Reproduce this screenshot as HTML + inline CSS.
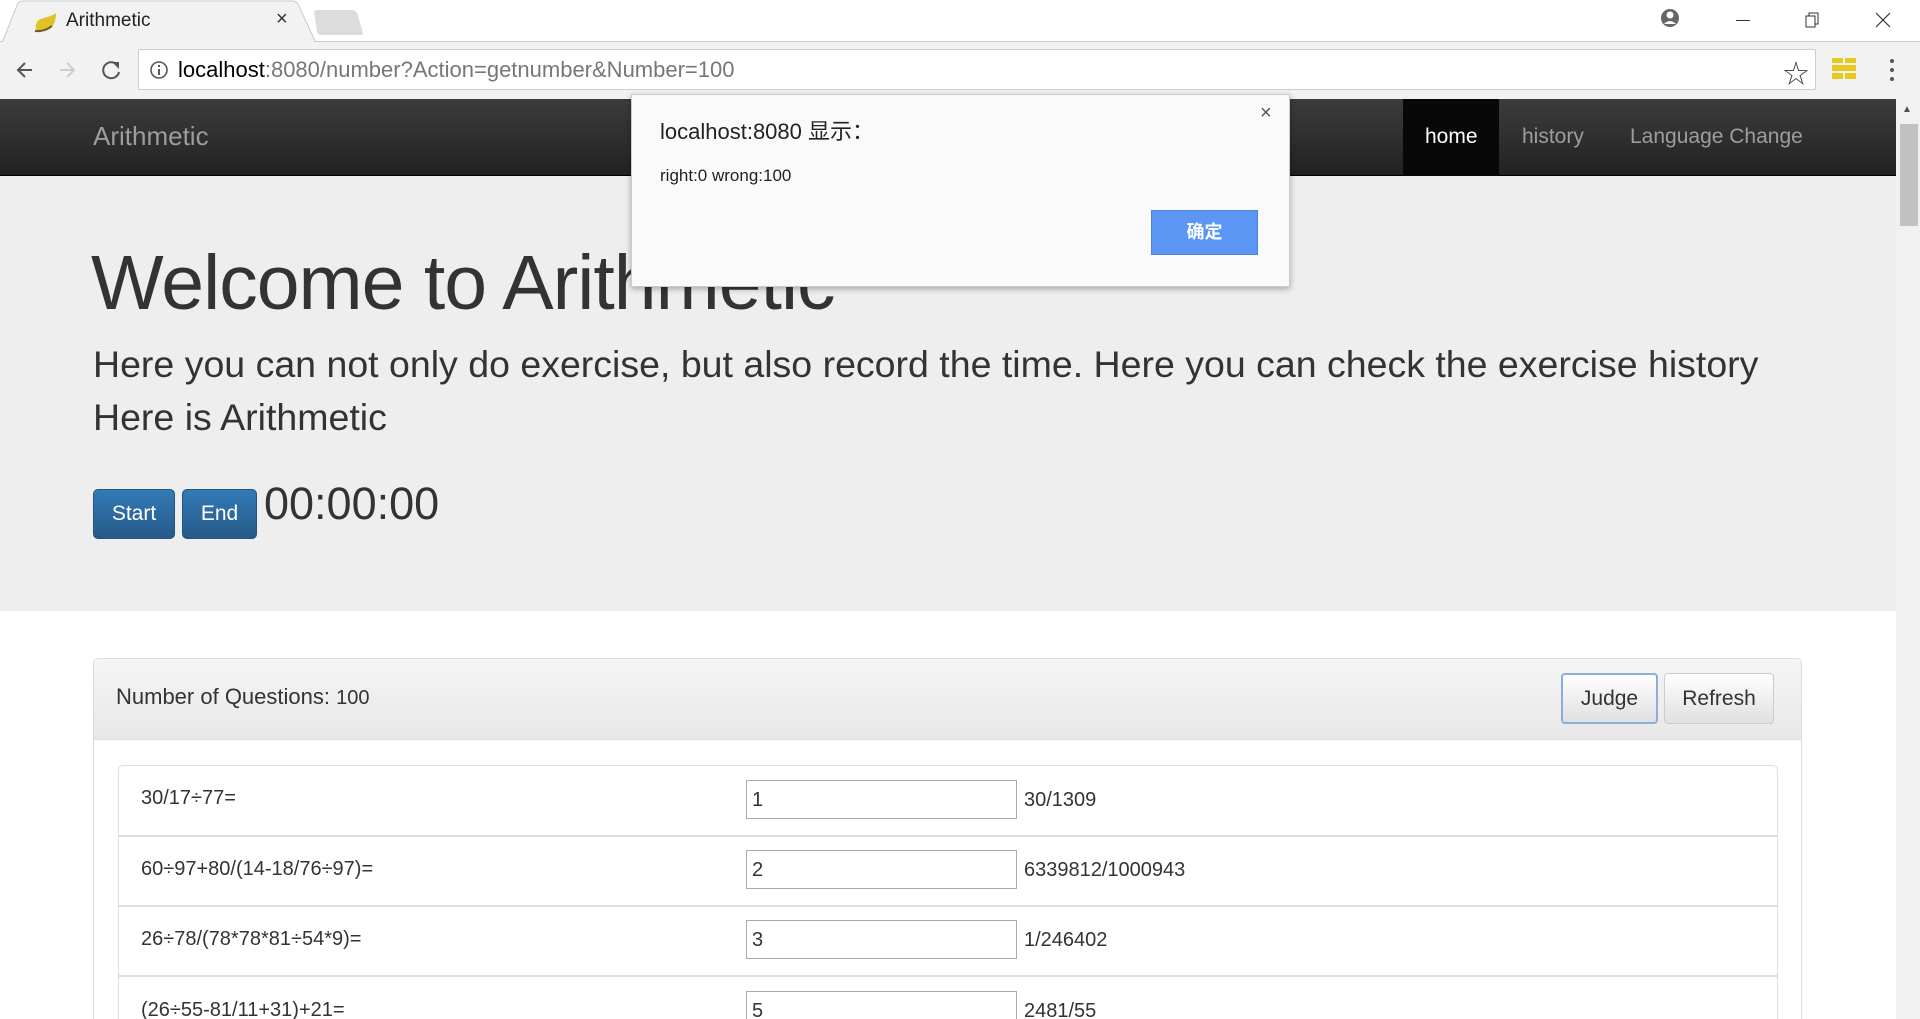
<!DOCTYPE html>
<html style="width:1920px;height:1019px;overflow:hidden"><head><meta charset="utf-8"><style>
*{box-sizing:border-box;margin:0;padding:0}
body{width:1920px;height:1019px;overflow:hidden;background:#fff;font-family:"Liberation Sans","Noto Sans CJK SC",sans-serif;position:relative;color:#333}
.abs{position:absolute}
</style></head><body>
<!-- title bar -->
<div class="abs" style="left:0;top:0;width:1920px;height:42px;background:#fff"></div>
<div class="abs" style="left:0;top:41px;width:1920px;height:1px;background:#ccc"></div>
<svg class="abs" style="left:0;top:0" width="370" height="43"><path d="M2,43 L18,3 Q20,1 24,1 L292,1 Q296,1 298,4 L316,43 Z" fill="#f2f2f2" stroke="#c8c8c8"/><path d="M314,12 Q315,10 318,10 L352,10 Q355,10 357,13 L363,33 Q363,35 360,35 L322,35 Q318,35 317,32 Z" fill="#dcdcdc"/></svg>
<div class="abs" style="left:0;top:42px;width:1920px;height:57px;background:#f2f2f2"></div>
<svg class="abs" style="top:12px;left:32px" width="26" height="22"><path d="M4,18 Q2,8 12,6 Q20,4 24,1 Q24,14 16,18 Q10,21 4,18Z" fill="#e2c228"/><path d="M3,19 Q12,20 20,14" stroke="#6b5a30" stroke-width="2" fill="none"/></svg>
<div class="abs" style="left:66px;top:10px;font-size:19px;color:#222">Arithmetic</div>
<div class="abs" style="left:276px;top:8px;font-size:20px;color:#333">×</div>
<!-- window controls -->
<svg class="abs" style="left:1660px;top:8px" width="24" height="24"><circle cx="10" cy="10" r="9" fill="#666"/><circle cx="10" cy="7" r="3.5" fill="#fff"/><path d="M4,16 Q10,10 16,16" fill="#fff"/></svg>
<div class="abs" style="left:1736px;top:20px;width:14px;height:1px;background:#333"></div>
<svg class="abs" style="left:1805px;top:12px" width="16" height="16"><rect x="1" y="4" width="9" height="11" fill="none" stroke="#333"/><path d="M4,4 V1 H13 V12 H10" fill="none" stroke="#333"/></svg>
<svg class="abs" style="left:1875px;top:12px" width="16" height="16"><path d="M1,1 L15,15 M15,1 L1,15" stroke="#333" stroke-width="1.2"/></svg>
<!-- toolbar -->
<svg class="abs" style="left:14px;top:58px" width="110" height="24"><path d="M18,12 H4 M11,5 L4,12 L11,19" stroke="#555" stroke-width="2" fill="none"/><path d="M46,12 H60 M53,5 L60,12 L53,19" stroke="#ccc" stroke-width="2" fill="none"/><path d="M104,8 A8,8 0 1 0 105,14" stroke="#555" stroke-width="2" fill="none"/><path d="M98,4 L105,4 L105,11Z" fill="#555"/></svg>
<div class="abs" style="left:138px;top:49px;width:1678px;height:41px;background:#fff;border:1px solid #ccc;border-radius:2px"></div>
<svg class="abs" style="left:149px;top:60px" width="20" height="20"><circle cx="10" cy="10" r="8" stroke="#555" stroke-width="1.6" fill="none"/><rect x="9" y="9" width="2" height="6" fill="#555"/><rect x="9" y="5" width="2" height="2" fill="#555"/></svg>
<div class="abs" style="left:178px;top:57px;font-size:22px;color:#000">localhost<span style="color:#777">:8080/number?Action=getnumber&amp;Number=100</span></div>
<div class="abs" style="left:1783px;top:54px;font-size:26px;color:#444">☆</div>
<svg class="abs" style="left:1832px;top:58px" width="26" height="24"><rect x="0" y="0" width="11" height="5" fill="#e6c81e"/><rect x="13" y="0" width="11" height="5" fill="#e6c81e"/><rect x="0" y="7" width="24" height="6" fill="#e6c81e"/><rect x="0" y="15" width="11" height="6" fill="#e6c81e"/><rect x="13" y="15" width="11" height="6" fill="#e6c81e"/></svg>
<svg class="abs" style="left:1889px;top:58px" width="6" height="24"><circle cx="3" cy="3" r="2" fill="#555"/><circle cx="3" cy="12" r="2" fill="#555"/><circle cx="3" cy="21" r="2" fill="#555"/></svg>
<!-- navbar -->
<div class="abs" style="left:0;top:99px;width:1896px;height:77px;background:linear-gradient(#3c3c3c,#222);border-bottom:1px solid #000"></div>
<div class="abs" style="left:93px;top:121px;font-size:26px;color:#9d9d9d">Arithmetic</div>
<div class="abs" style="left:1403px;top:99px;width:96px;height:77px;background:#080808"></div>
<div class="abs" style="left:1425px;top:125px;font-size:21px;color:#fff">home</div>
<div class="abs" style="left:1522px;top:125px;font-size:21px;color:#9d9d9d">history</div>
<div class="abs" style="left:1630px;top:125px;font-size:21px;color:#9d9d9d">Language Change</div>
<!-- scrollbar -->
<div class="abs" style="left:1896px;top:99px;width:24px;height:920px;background:#f1f1f1"></div>
<div class="abs" style="left:1900px;top:124px;width:18px;height:102px;background:#c1c1c1"></div>
<div class="abs" style="left:1902px;top:104px;font-size:10px;color:#505050">▲</div>
<!-- jumbotron -->
<div class="abs" style="left:0;top:176px;width:1896px;height:435px;background:#eee"></div>
<div class="abs" style="left:91px;top:241px;font-size:77px;letter-spacing:-1px;color:#333;line-height:1.1">Welcome to Arithmetic</div>
<div class="abs" style="left:93px;top:338px;font-size:37.5px;color:#333;line-height:52.5px">Here you can not only do exercise, but also record the time. Here you can check the exercise history<br>Here is Arithmetic</div>
<div class="abs" style="left:93px;top:489px;width:82px;height:50px;background:linear-gradient(#337ab7,#265a88);border:1px solid #245580;border-radius:5px;color:#fff;font-size:21px;text-align:center;line-height:48px">Start</div>
<div class="abs" style="left:182px;top:489px;width:75px;height:50px;background:linear-gradient(#337ab7,#265a88);border:1px solid #245580;border-radius:5px;color:#fff;font-size:21px;text-align:center;line-height:48px">End</div>
<div class="abs" style="left:264px;top:478px;font-size:45px;color:#333">00:00:00</div>
<!-- panel -->
<div class="abs" style="left:93px;top:658px;width:1709px;height:361px;border:1px solid #ddd;border-bottom:none;border-radius:5px 5px 0 0;background:#fff"></div>
<div class="abs" style="left:94px;top:659px;width:1707px;height:81px;background:linear-gradient(#f5f5f5,#e8e8e8);border-bottom:1px solid #ddd;border-radius:5px 5px 0 0"></div>
<div class="abs" style="left:116px;top:684px;font-size:22px;color:#333">Number of Questions: <span style="font-size:20px">100</span></div>
<div class="abs" style="left:1561px;top:673px;width:97px;height:51px;background:linear-gradient(#fff,#e0e0e0);border:2px solid #8ab0d8;border-radius:4px;font-size:21px;text-align:center;line-height:47px">Judge</div>
<div class="abs" style="left:1664px;top:673px;width:110px;height:51px;background:linear-gradient(#fff,#e0e0e0);border:1px solid #ccc;border-radius:4px;font-size:21px;text-align:center;line-height:49px">Refresh</div>
<div class="abs" style="left:118px;top:765px;width:1660px;height:254px;border:1px solid #ddd;border-bottom:none;border-radius:5px 5px 0 0"></div>
<div class="abs" style="left:118px;top:835px;width:1660px;height:2px;background:#ddd"></div>
<div class="abs" style="left:118px;top:905px;width:1660px;height:2px;background:#ddd"></div>
<div class="abs" style="left:118px;top:975px;width:1660px;height:2px;background:#ddd"></div>

<div class="abs" style="left:141px;top:787px;font-size:20px">30/17÷77=</div>
<div class="abs" style="left:746px;top:780px;width:271px;height:39px;border:1px solid #aaa;font-size:20px;padding:8px 0 0 5px">1</div>
<div class="abs" style="left:1024px;top:789px;font-size:20px">30/1309</div>

<div class="abs" style="left:141px;top:858px;font-size:20px">60÷97+80/(14-18/76÷97)=</div>
<div class="abs" style="left:746px;top:850px;width:271px;height:39px;border:1px solid #aaa;font-size:20px;padding:8px 0 0 5px">2</div>
<div class="abs" style="left:1024px;top:859px;font-size:20px">6339812/1000943</div>

<div class="abs" style="left:141px;top:928px;font-size:20px">26÷78/(78*78*81÷54*9)=</div>
<div class="abs" style="left:746px;top:920px;width:271px;height:39px;border:1px solid #aaa;font-size:20px;padding:8px 0 0 5px">3</div>
<div class="abs" style="left:1024px;top:929px;font-size:20px">1/246402</div>

<div class="abs" style="left:0;top:990px;width:1896px;height:29px;overflow:hidden">
<div class="abs" style="left:141px;top:9px;font-size:20px">(26÷55-81/11+31)+21=</div>
<div class="abs" style="left:746px;top:1px;width:271px;height:39px;border:1px solid #aaa;font-size:20px;padding:8px 0 0 5px">5</div>
<div class="abs" style="left:1024px;top:10px;font-size:20px">2481/55</div>
</div>

<!-- dialog -->
<div class="abs" style="left:631px;top:94px;width:659px;height:193px;background:#fafafa;border:1px solid #ccc;box-shadow:0 2px 6px rgba(0,0,0,.3)"></div>
<div class="abs" style="left:660px;top:114px;font-size:22px;color:#222">localhost:8080 显示：</div>
<div class="abs" style="left:1260px;top:102px;font-size:20px;color:#555">×</div>
<div class="abs" style="left:660px;top:166px;font-size:17px;color:#222">right:0 wrong:100</div>
<div class="abs" style="left:1151px;top:210px;width:107px;height:45px;background:#5b96f5;border:1px solid #4a84e0;color:#fff;font-size:18px;font-weight:bold;text-align:center;line-height:43px">确定</div>
</body></html>
